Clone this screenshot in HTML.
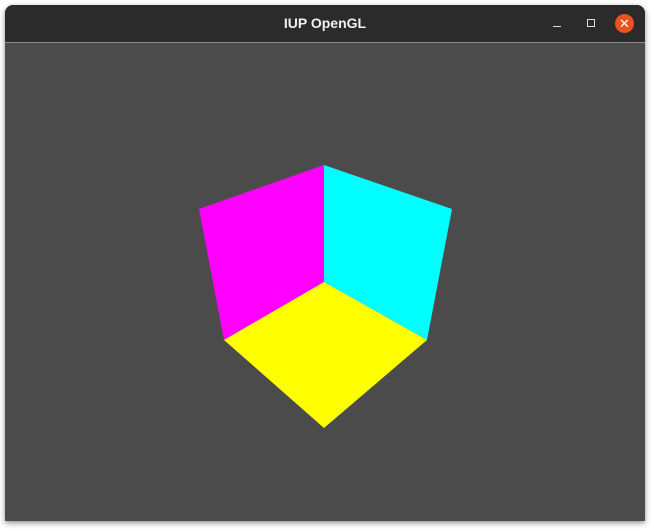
<!DOCTYPE html>
<html><head><style>
html,body{margin:0;padding:0;background:#fff;width:654px;height:531px;overflow:hidden}
.win{position:absolute;left:5px;top:5px;width:640px;height:516px;border-radius:8px 8px 0 0;overflow:hidden;box-shadow:0 2px 6px rgba(0,0,0,.45);background:#4b4b4b}
.tb{position:absolute;left:0;top:0;width:640px;height:37px;background:#2b2b2b;border-bottom:1px solid #8a8a8a}
.t{position:absolute;left:0;width:640px;top:10px;text-align:center;color:#f0f0f0;font:bold 14px "Liberation Sans",sans-serif}
</style></head><body>
<div class="win">
<div class="tb"><div class="t">IUP OpenGL</div>
<div style="position:absolute;left:548px;top:21px;width:8px;height:1px;background:#ddd"></div>
<div style="position:absolute;left:582px;top:14px;width:6px;height:6px;border:1.5px solid #ddd"></div>
<div style="position:absolute;left:610px;top:9px;width:19px;height:19px;border-radius:50%;background:#e95420;color:#fff;font:13px 'Liberation Sans',sans-serif;text-align:center;line-height:19px">✕</div>
</div>
</div>
<svg width="654" height="531" style="position:absolute;left:0;top:0">
<polygon points="199,209 324,165 324,282 224,340" fill="#ff00ff"/>
<polygon points="324,165 452,209 427,340 324,282" fill="#00ffff"/>
<polygon points="224,340 324,282 427,340 324,428" fill="#ffff00"/>
</svg>
</body></html>
